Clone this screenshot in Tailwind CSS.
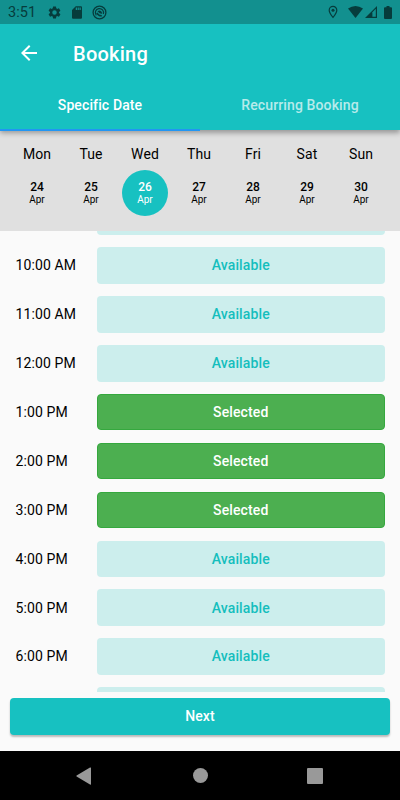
<!DOCTYPE html>
<html lang="en">
<head>
<meta charset="utf-8">
<meta name="viewport" content="width=device-width, initial-scale=1">
<title>Booking</title>
<script src="https://cdn.jsdelivr.net/npm/@tailwindcss/browser@4"></script>
</head>
<body class="m-0 overflow-hidden">
<div class="flex h-[800px] w-[400px] flex-col overflow-hidden bg-[#fafafa] font-[Roboto,sans-serif] text-black">
  <header class="relative z-10 flex h-[130px] shrink-0 flex-col bg-[#17c1c1] text-white shadow-[0_3px_5px_rgba(0,0,0,0.32)]">
    <div class="flex h-6 shrink-0 items-center bg-[#12908f] pr-[8px] pl-2 text-[#063c3c]">
      <span class="w-[39px] pt-0.5 text-[14.5px] leading-6 tracking-[0.1px]">3:51</span>
      <svg class="h-[15px] w-[15px]" viewBox="0 0 24 24" fill="currentColor"><path d="M19.14 12.94c.04-.3.06-.61.06-.94s-.02-.64-.07-.94l2.03-1.58a.5.5 0 0 0 .12-.61l-1.92-3.32a.49.49 0 0 0-.59-.22l-2.39.96a7 7 0 0 0-1.62-.94l-.36-2.54a.48.48 0 0 0-.48-.41h-3.84a.47.47 0 0 0-.47.41l-.36 2.54c-.59.24-1.13.57-1.62.94l-2.39-.96a.47.47 0 0 0-.59.22L2.74 8.87a.47.47 0 0 0 .12.61l2.03 1.58a7 7 0 0 0 0 1.88l-2.03 1.58a.5.5 0 0 0-.12.61l1.92 3.32c.12.22.37.29.59.22l2.39-.96c.5.38 1.03.7 1.62.94l.36 2.54c.05.24.24.41.48.41h3.84c.24 0 .44-.17.47-.41l.36-2.54a7 7 0 0 0 1.62-.94l2.39.96c.22.08.47 0 .59-.22l1.92-3.32a.47.47 0 0 0-.12-.61zM12 15.6a3.6 3.6 0 1 1 0-7.2 3.6 3.6 0 0 1 0 7.2z"/></svg>
      <svg class="ml-[7px] h-[15px] w-[16px]" viewBox="0 0 24 24" fill="currentColor"><path d="M18 2h-8L4 8v12c0 1.100.9 2 2 2h12c1.100 0 2-.9 2-2V4c0-1.100-.9-2-2-2zm-6 6h-2V4h2v4zm3 0h-2V4h2v4zm3 0h-2V4h2v4z"/></svg>
      <svg class="ml-[7px] h-[15px] w-[15px]" viewBox="0 0 15 15" fill="none" stroke="currentColor"><circle cx="7.500" cy="7.500" r="6.400" stroke-width="1.300"/><path d="M4.300 10.300A4.100 4.100 0 1 1 11.300 9" stroke-width="1.200"/><path d="M5.500 6.200q2.500-1.800 4.300.8l.2 1.800q-2 .3-4.500-2.600z" fill="currentColor" stroke="none"/><path d="M4.800 7.800q1.800 3.200 5 3" stroke-width="1.500"/></svg>
      <div class="ml-auto flex items-center">
        <svg class="h-[14px] w-[10px]" viewBox="0 0 10 14" fill="none" stroke="currentColor"><path d="M5 12.300C2.800 9.700 1.200 7.500 1.200 5.200a3.800 3.800 0 0 1 7.600 0C8.800 7.500 7.200 9.700 5 12.300z" stroke-width="1.200"/><circle cx="5" cy="5.200" r="1.500" fill="currentColor" stroke="none"/></svg>
        <svg class="ml-[10px] h-[12px] w-[15px]" viewBox="0 0 15 12" fill="currentColor"><path d="M0 2.500Q7.500-2.500 15 2.500L7.500 12z"/></svg>
        <svg class="ml-[2px] h-[12px] w-[12px]" viewBox="0 0 13 13"><path d="M0 13L13 0v13z" fill="currentColor"/><path d="M8 6.700v5h3.700V3z" fill="#12908f"/></svg>
        <svg class="ml-[7px] h-[13px] w-[8px]" viewBox="0 0 8 13" fill="currentColor"><path d="M2.500 0h3v1.300H7q1 0 1 1V12q0 1-1 1H1q-1 0-1-1V2.300q0-1 1-1h1.500z"/></svg>
      </div>
    </div>
    <div class="flex h-[57px] shrink-0 items-center pt-px pl-[17px]">
      <svg class="h-6 w-6" viewBox="0 0 24 24" fill="currentColor"><path d="M20 11H7.830l5.590-5.590L12 4l-8 8 8 8 1.410-1.410L7.830 13H20v-2z"/></svg>
      <h1 class="ml-8 pt-0.5 text-[20px] leading-6 font-medium tracking-[0.250px]">Booking</h1>
    </div>
    <nav class="grid h-[49px] grid-cols-2 text-center text-[14px] font-medium tracking-[0.120px]">
      <a class="border-b-2 border-[#2196f3] leading-[48px]">Specific Date</a>
      <a class="leading-[48px] text-white/70">Recurring Booking</a>
    </nav>
  </header>

  <section class="h-[101px] shrink-0 bg-[#e0e0e0] pt-[14px] pr-[12px] pl-[10px]">
    <div id="days" class="grid grid-cols-7 text-center"></div>
  </section>

  <main class="h-[461px] shrink-0 overflow-hidden">
    <div id="slots" class="-mt-[32.700px] flex flex-col gap-[12.300px] pr-[15.500px] pl-[15.500px]"></div>
  </main>

  <div class="h-[59px] shrink-0 px-[10px] pt-[6px]">
    <button class="block h-[37px] w-full rounded-[4px] bg-[#17c1c1] text-[14px] font-medium tracking-[0.100px] text-white shadow-[0_2px_2px_rgba(0,0,0,0.26)]">Next</button>
  </div>

  <footer class="flex h-[49px] shrink-0 items-center bg-black text-[#999999]">
    <svg class="ml-[76px] h-[18px] w-[15px]" viewBox="0 0 15 18" fill="currentColor"><path d="M14 .6Q15 0 15 1v16q0 1-1 .4L.6 9.600Q0 9 .6 8.400z"/></svg>
    <div class="ml-[101.500px] h-[15px] w-[15px] rounded-full bg-[#999999]"></div>
    <div class="ml-[99.500px] h-[16px] w-[16px] rounded-[1px] bg-[#999999]"></div>
  </footer>
</div>
<script>
  const days = [["Mon", 24], ["Tue", 25], ["Wed", 26], ["Thu", 27], ["Fri", 28], ["Sat", 29], ["Sun", 30]];
  document.getElementById("days").innerHTML = days.map(([name, date]) => `
    <div class="flex flex-col items-center">
      <span class="text-[14px] leading-5 tracking-[0.100px]">${name}</span>
      <div class="${date === 26 ? "bg-[#17c1c1] text-white" : ""} mt-[6px] flex h-[46px] w-[46px] flex-col items-center rounded-full pt-[10px]">
        <span class="text-[12px] leading-[14px] font-medium">${date}</span>
        <span class="text-[10px] leading-[12px]">Apr</span>
      </div>
    </div>`).join("");

  // The rows at both ends are scrolled mostly out of view and carry no label.
  const slots = [["", 0], ["10:00 AM", 0], ["11:00 AM", 0], ["12:00 PM", 0], ["1:00 PM", 1], ["2:00 PM", 1], ["3:00 PM", 1], ["4:00 PM", 0], ["5:00 PM", 0], ["6:00 PM", 0], ["", 0]];
  document.getElementById("slots").innerHTML = slots.map(([time, selected]) => `
    <div class="flex h-[36.600px] shrink-0 items-center text-[14px]">
      <span class="w-[81.500px] shrink-0 pt-[0.700px] tracking-[0.120px]">${time}</span>
      <div class="${selected ? "border border-[#35a83e] bg-[#4caf50] text-white" : "bg-[#cceeed] text-[#14bebd]"} flex h-full flex-1 items-center justify-center rounded-[4px] pt-[0.700px] font-medium tracking-[0.120px]">${!time ? "" : selected ? "Selected" : "Available"}</div>
    </div>`).join("");
</script>
</body>
</html>
